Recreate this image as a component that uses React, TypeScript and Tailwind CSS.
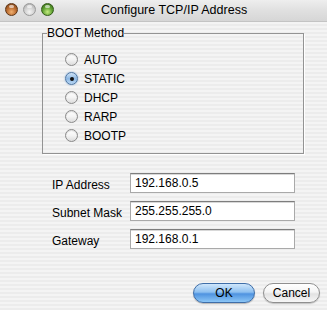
import React from "react";

function Light({ kind }: { kind: "close" | "min" | "zoom" }) {
  const cls =
    kind === "close"
      ? "bg-[radial-gradient(circle_at_50%_72%,#f0b070_0%,#b8692e_50%,#74401a_100%)] border-[#5e3515]"
      : kind === "min"
      ? "bg-[radial-gradient(circle_at_50%_72%,#f4f4f4_0%,#d0d0d0_50%,#a4a4a4_100%)] border-[#9a9a9a]"
      : "bg-[radial-gradient(circle_at_50%_72%,#c4ec80_0%,#5fa032_50%,#356516_100%)] border-[#325a18]";
  return (
    <div className={`relative w-[13px] h-[13px] rounded-full border ${cls}`}>
      <div className="absolute left-[3px] top-[1px] w-[5px] h-[3px] rounded-full bg-white/60" />
    </div>
  );
}

function Radio({ label, checked }: { label: string; checked?: boolean }) {
  return (
    <div className="flex items-center h-[19px] gap-[6px]">
      {checked ? (
        <div className="w-[13px] h-[13px] rounded-full border border-[#4f77a3] bg-[linear-gradient(180deg,#cfe3f7_0%,#8fb9e4_50%,#b8d6f3_100%)] flex items-center justify-center shadow-[0_0_2px_#7aa6d8]">
          <div className="w-[4px] h-[4px] rounded-full bg-[#111]" />
        </div>
      ) : (
        <div className="w-[13px] h-[13px] rounded-full border border-[#8a8a8a] bg-[linear-gradient(180deg,#ffffff_0%,#f4f4f4_50%,#dcdcdc_100%)] shadow-[inset_0_1px_1px_rgba(0,0,0,0.15)]" />
      )}
      <span className="text-[12px] leading-[14px] text-black">{label}</span>
    </div>
  );
}

function Field({ label, value }: { label: string; value: string }) {
  return (
    <div className="flex items-center h-[20px]">
      <span className="w-[78px] pt-[3px] text-[12px] leading-[14px] text-black">{label}</span>
      <div className="w-[165px] h-[20px] bg-white border border-[#a9a9a9] border-t-[#7d7d7d] shadow-[inset_0_1px_0_#d8d8d8] pl-[4px] flex items-center text-[12px] leading-[14px] text-black">
        {value}
      </div>
    </div>
  );
}

export default function App() {
  return (
    <div
      className="w-[327px] h-[310px] overflow-hidden bg-[repeating-linear-gradient(180deg,#ececec_0px,#ececec_2px,#f4f4f4_2px,#f4f4f4_4px)]"
      style={{ fontFamily: '"Liberation Sans", Arial, sans-serif' }}
    >
      <div className="h-[22px] flex items-center bg-[linear-gradient(180deg,#eeeeee_0%,#e0e0e0_50%,#d6d6d6_100%)] border-b border-[#c4c4c4]">
        <div className="flex items-center gap-[5px] pl-[5px] -mt-[3px]">
          <Light kind="close" />
          <Light kind="min" />
          <Light kind="zoom" />
        </div>
        <span className="ml-[47px] -mt-[2px] text-[12.5px] leading-[14px] text-black">Configure TCP/IP Address</span>
      </div>

      <fieldset className="ml-[42px] mt-[4px] w-[262px] border border-[#939393] shadow-[1px_1px_0_#ffffff] p-0">
        <legend className="ml-[4px] px-0 text-[12px] leading-[14px] text-black">BOOT Method</legend>
        <div className="pt-[10px] pb-[8px] pl-[22px]">
          <Radio label="AUTO" />
          <Radio label="STATIC" checked />
          <Radio label="DHCP" />
          <Radio label="RARP" />
          <Radio label="BOOTP" />
        </div>
      </fieldset>

      <div className="ml-[52px] mt-[19px] flex flex-col gap-[8px]">
        <Field label="IP Address" value="192.168.0.5" />
        <Field label="Subnet Mask" value="255.255.255.0" />
        <Field label="Gateway" value="192.168.0.1" />
      </div>

      <div className="flex justify-end gap-[8px] pr-[7px] mt-[34px]">
        <button className="w-[62px] h-[20px] rounded-full border border-[#3f6ea8] bg-[linear-gradient(180deg,#cfe6fb_0%,#8ec0f0_45%,#4f93e0_55%,#8cc6f6_100%)] text-[12px] leading-[14px] text-black shadow-[0_1px_1px_rgba(0,0,0,0.25)]">
          OK
        </button>
        <button className="w-[57px] h-[20px] rounded-full border border-[#8f8f8f] bg-[linear-gradient(180deg,#ffffff_0%,#f4f4f4_45%,#e2e2e2_55%,#f6f6f6_100%)] text-[12px] leading-[14px] text-black shadow-[0_1px_1px_rgba(0,0,0,0.2)]">
          Cancel
        </button>
      </div>
    </div>
  );
}
